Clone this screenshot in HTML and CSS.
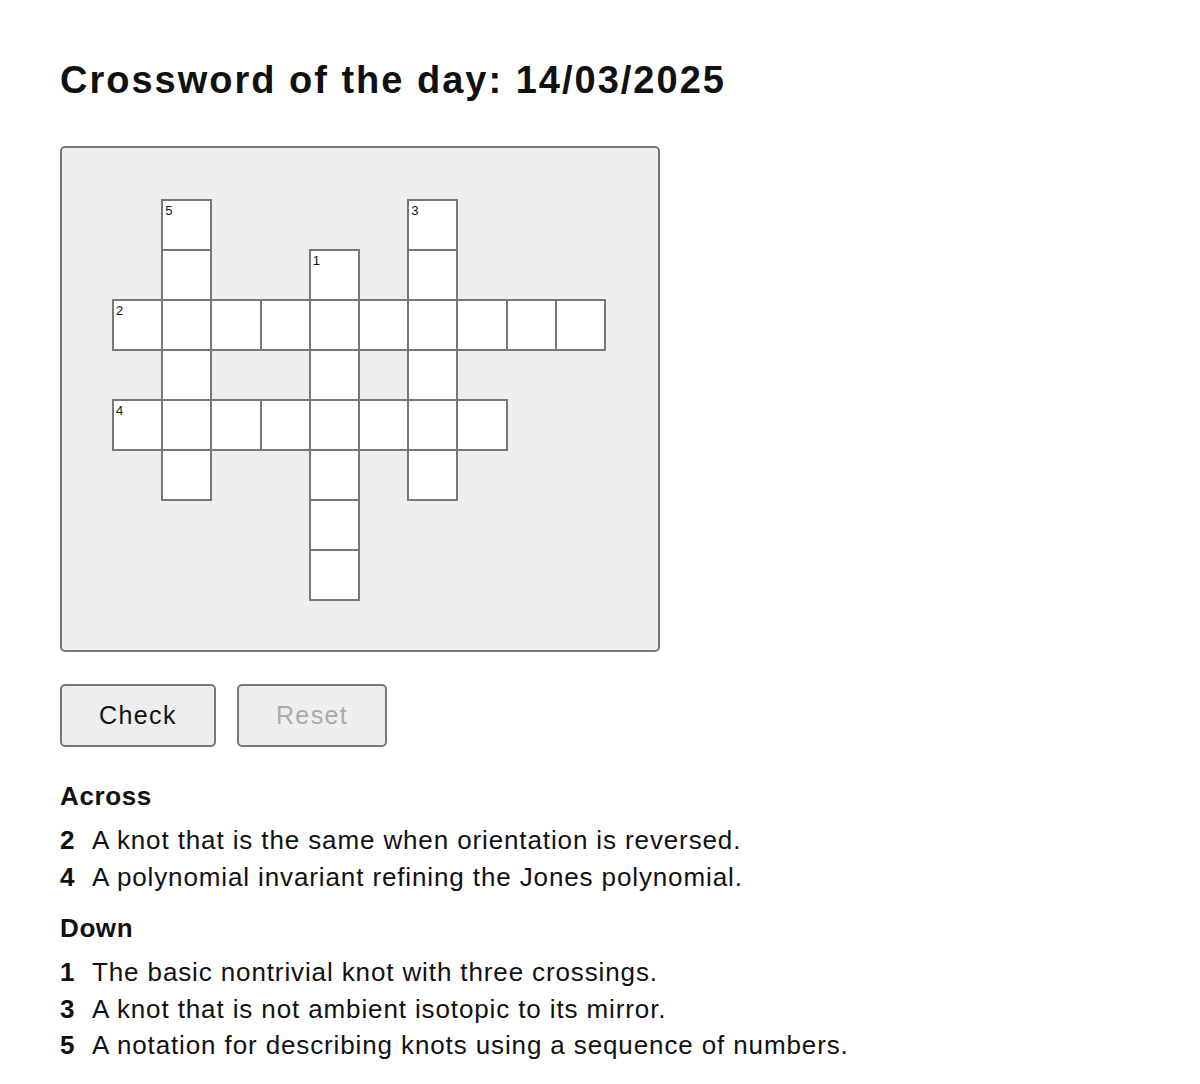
FILE: index.html
```html
<!DOCTYPE html>
<html lang="en">
  <head>
    <meta charset="utf-8" />
    <meta name="viewport" content="width=device-width, initial-scale=1.0" />
    <title>Crossword of the day</title>
    <link rel="stylesheet" href="styles.css">
  </head>
  <body>
    <div class="page">
      <h1 class="title">Crossword of the day: 14/03/2025</h1>

      <div class="board">
        <div class="grid">
          <!-- row 1 -->
          <div class="blank"></div><div class="cell"><span class="num">5</span></div><div class="blank"></div><div class="blank"></div><div class="blank"></div>
          <div class="blank"></div><div class="cell"><span class="num">3</span></div><div class="blank"></div><div class="blank"></div><div class="blank"></div>
          <!-- row 2 -->
          <div class="blank"></div><div class="cell"></div><div class="blank"></div><div class="blank"></div><div class="cell"><span class="num">1</span></div>
          <div class="blank"></div><div class="cell"></div><div class="blank"></div><div class="blank"></div><div class="blank"></div>
          <!-- row 3 -->
          <div class="cell"><span class="num">2</span></div><div class="cell"></div><div class="cell"></div><div class="cell"></div><div class="cell"></div>
          <div class="cell"></div><div class="cell"></div><div class="cell"></div><div class="cell"></div><div class="cell"></div>
          <!-- row 4 -->
          <div class="blank"></div><div class="cell"></div><div class="blank"></div><div class="blank"></div><div class="cell"></div>
          <div class="blank"></div><div class="cell"></div><div class="blank"></div><div class="blank"></div><div class="blank"></div>
          <!-- row 5 -->
          <div class="cell"><span class="num">4</span></div><div class="cell"></div><div class="cell"></div><div class="cell"></div><div class="cell"></div>
          <div class="cell"></div><div class="cell"></div><div class="cell"></div><div class="blank"></div><div class="blank"></div>
          <!-- row 6 -->
          <div class="blank"></div><div class="cell"></div><div class="blank"></div><div class="blank"></div><div class="cell"></div>
          <div class="blank"></div><div class="cell"></div><div class="blank"></div><div class="blank"></div><div class="blank"></div>
          <!-- row 7 -->
          <div class="blank"></div><div class="blank"></div><div class="blank"></div><div class="blank"></div><div class="cell"></div>
          <div class="blank"></div><div class="blank"></div><div class="blank"></div><div class="blank"></div><div class="blank"></div>
          <!-- row 8 -->
          <div class="blank"></div><div class="blank"></div><div class="blank"></div><div class="blank"></div><div class="cell"></div>
          <div class="blank"></div><div class="blank"></div><div class="blank"></div><div class="blank"></div><div class="blank"></div>
        </div>
      </div>

      <div class="actions">
        <button class="btn" type="button">Check</button>
        <button class="btn" type="button" disabled>Reset</button>
      </div>

      <div class="clues">
        <h2 class="clues-title">Across</h2>
        <ul class="clue-list">
          <li class="clue"><b class="clue-num">2</b><span>A knot that is the same when orientation is reversed.</span></li>
          <li class="clue"><b class="clue-num">4</b><span>A polynomial invariant refining the Jones polynomial.</span></li>
        </ul>
      </div>

      <div class="clues">
        <h2 class="clues-title">Down</h2>
        <ul class="clue-list">
          <li class="clue"><b class="clue-num">1</b><span>The basic nontrivial knot with three crossings.</span></li>
          <li class="clue"><b class="clue-num">3</b><span>A knot that is not ambient isotopic to its mirror.</span></li>
          <li class="clue"><b class="clue-num">5</b><span>A notation for describing knots using a sequence of numbers.</span></li>
        </ul>
      </div>
    </div>
  </body>
</html>
```

FILE: styles.css
```css
body {
  margin: 0;
  background: #fff;
  color: #111;
  font-family: "Liberation Sans", Helvetica, Arial, sans-serif;
}

.page {
  padding: 58px 60px 0 60px;
}

.title {
  margin: 0 0 44px 0;
  font-size: 38px;
  line-height: 44px;
  font-weight: bold;
  letter-spacing: 2px;
}

/* board */
.board {
  width: 600px;
  box-sizing: border-box;
  padding: 51px 54px 51px 50px;
  background-color: #eee;
  border: 2px solid #777;
  border-radius: 5px;
}

.grid {
  display: grid;
  grid-template-columns: repeat(10, 1fr);
  grid-template-rows: repeat(8, 50px);
}

.cell {
  margin: 0 -2px -2px 0;
  padding: 2px 2px;
  background-color: #fff;
  border: 2px solid #777;
  font-size: 13px;
  line-height: 15px;
}

.num {
  display: block;
  color: #111;
}

/* buttons */
.actions {
  display: flex;
  gap: 21px;
  margin-top: 32px;
}

.btn {
  height: 63px;
  padding: 0 37px;
  background-color: #eee;
  border: 2px solid #777;
  border-radius: 5px;
  color: #111;
  font-family: "Liberation Sans", Helvetica, Arial, sans-serif;
  font-size: 25px;
  letter-spacing: 1.4px;
}

.btn:disabled {
  color: #aaa;
}

/* clues */
.clues {
  margin-top: 31px;
}

.clues + .clues {
  margin-top: 15px;
}

.clues-title {
  margin: 0 0 8px 0;
  font-size: 26px;
  line-height: 36px;
  font-weight: bold;
  letter-spacing: 0.6px;
}

.clue-list {
  list-style: none;
  margin: 0;
  padding: 0;
}

.clue {
  display: flex;
  font-size: 26px;
  line-height: 36.5px;
  letter-spacing: 0.88px;
}

.clue-num {
  width: 32px;
  flex: none;
}
```
